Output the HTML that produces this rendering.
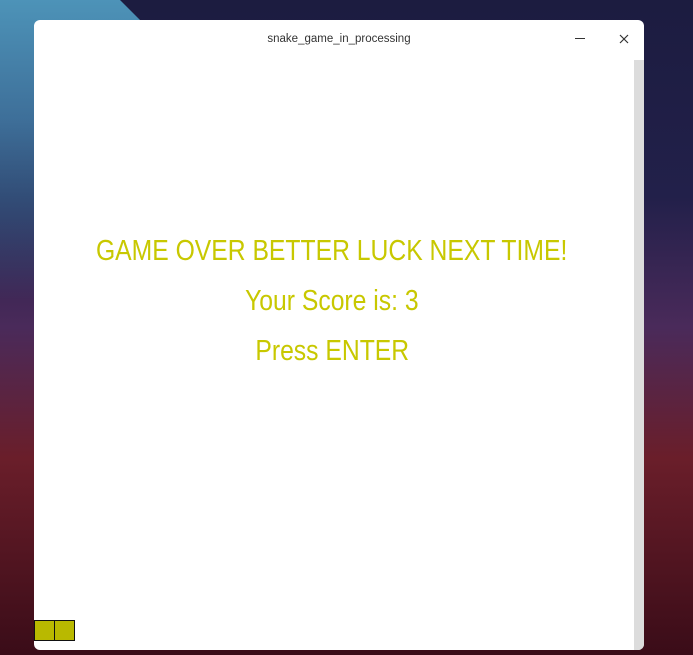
<!DOCTYPE html>
<html><head><style>
html,body{margin:0;padding:0;width:693px;height:655px;overflow:hidden}
body{position:relative;background:
linear-gradient(180deg,#1c1c40 0%,#22204a 30%,#4a2a5a 50%,#6a1e2a 70%,#3a0c18 100%);}
.tl{position:absolute;left:0;top:0;width:150px;height:300px;background:linear-gradient(180deg,#4d93b8 0%,#3e6f99 40%,rgba(62,111,153,0) 100%);clip-path:polygon(0 0,120px 0,150px 30px,150px 300px,0 300px)}
.win{position:absolute;left:34px;top:20px;width:610px;height:630px;background:#fff;border-radius:6px;overflow:hidden}
.title{position:absolute;left:0;right:0;top:13px;text-align:center;font:11.5px "Liberation Sans",sans-serif;color:#333}
.sb{position:absolute;left:600px;top:40px;width:10px;height:590px;background:#dcdcdc}
.t{position:absolute;left:-2px;width:600px;text-align:center;font:29px "Liberation Sans",sans-serif;color:#c8c800;white-space:nowrap}
.t span{display:inline-block;transform:scaleX(0.852)}
.sq{position:absolute;top:600px;width:19px;height:19px;background:#b9b900;border:1px solid #111}
</style></head><body>
<div class="tl"></div>
<div class="win">
<div class="title">snake_game_in_processing</div>
<div style="position:absolute;left:541px;top:18px;width:10px;height:1px;background:#333"></div>
<svg style="position:absolute;left:585px;top:14px" width="10" height="10"><path d="M1 1L9 9M9 1L1 9" stroke="#333" stroke-width="1.2"/></svg>
<div class="sb"></div>
<div class="t" style="top:215px"><span>GAME OVER BETTER LUCK NEXT TIME!</span></div>
<div class="t" style="top:265px"><span>Your Score is: 3</span></div>
<div class="t" style="top:315px"><span>Press ENTER</span></div>
<div class="sq" style="left:0"></div>
<div class="sq" style="left:20px"></div>
</div>
</body></html>
